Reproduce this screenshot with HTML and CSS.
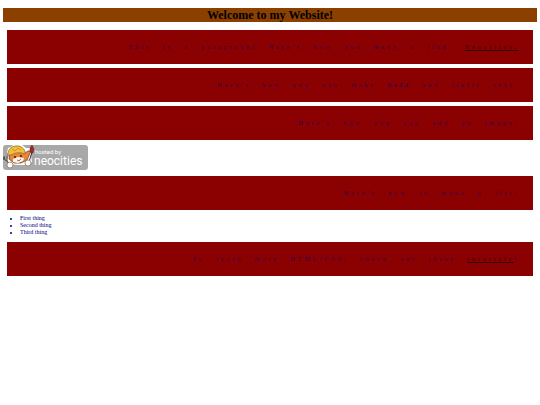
FILE: index.html
```html
<!DOCTYPE html>
<html lang="en">
<head>
<meta charset="utf-8">
<title>Welcome to my Website!</title>
<link rel="stylesheet" href="styles.css">
</head>
<body>
<h1>Welcome to my Website!</h1>
<p>This is a paragraph! Here's how you make a link: <a href="#neocities">Neocities.</a></p>
<p>Here's how you can make <strong>bold</strong> and <em>italic</em> text.</p>
<p>Here's how you can add an image:</p>
<a class="badge" href="#neocities" aria-label="Hosted by Neocities">
<svg width="85" height="25" viewBox="0 0 85 25">
<rect x="0" y="0" width="85" height="25" rx="3" fill="#a8a8a8"/>
<path d="M4 8 5 3 8 2 10 0 19 0 23 3 28 3 28 10 29 17 22 20 15 20 7 19 4 15 6 10Z" fill="#fff"/>
<path d="M7 7 6 14 11 18 18 18 24 15 28 6 25 6 22 8 19 7Z" fill="#e8843c" stroke="#51382c" stroke-width=".7"/>
<path d="M10 14 15 12 21 13 20 16 15 18 10 17Z" fill="#fff4e6"/>
<path d="M5 8Q6 2 12 1Q19 0 22 6L22 9Q15 6 8 10L4 10Z" fill="#f0c03a" stroke="#8c682c" stroke-width=".7"/>
<path d="M9 4 12 6 15 3 18 5" fill="none" stroke="#b88522" stroke-width=".7"/>
<circle cx="12" cy="12" r="1" fill="#30201c"/><circle cx="18" cy="11" r="1" fill="#30201c"/>
<path d="M14 15Q16 17 18 14" fill="none" stroke="#51382c" stroke-width=".7"/>
<path d="M1 11 2 15 4 16 7 20M4 11 4 16M1 15 0 12" fill="none" stroke="#4b4b4b"/>
<path d="M29 7 26 17" stroke="#4a2525"/><path d="M27 7 27 3 29 0 31 4 30 8Z" fill="#a32828" stroke="#552424" stroke-width=".5"/>
<circle cx="7" cy="20" r="3" fill="#fff" stroke="#8b6a50" stroke-width=".7"/>
<circle cx="25" cy="18" r="3" fill="#fff" stroke="#8b6a50" stroke-width=".7"/>
<text class="badge-small" x="32" y="9">hosted by</text>
<text class="badge-name" x="31" y="20">neocities</text>
</svg>
</a>
<p>Here's how to make a list:</p>
<ul>
<li>First thing</li>
<li>Second thing</li>
<li>Third thing</li>
</ul>
<p>To learn more HTML/CSS, check out these <a href="#tutorials">tutorials</a>!</p>
</body>
</html>
```
FILE: styles.css
```css
body {
  margin: 8px 3px;
  background: #fff;
  color: #000080;
  font: 6px/7px "Liberation Serif", serif;
}
h1 {
  margin: 0 0 8px;
  background: #8b4000;
  color: #000;
  font-size: 12px;
  line-height: 14px;
  text-align: center;
}
p {
  margin: 4px;
  padding: 13px 14px;
  line-height: 8px;
  background: #8b0000;
  color: #300058;
  text-align: right;
  letter-spacing: 3px;
  word-spacing: 7px;
}
a { color: #300000; }
.badge {
  display: block;
  width: 85px;
  margin: 5px 0 6px;
}
.badge svg { display: block; }
.badge-small, .badge-name {
  fill: #fff;
  font-family: Roboto, sans-serif;
}
.badge-small { font-size: 6px; }
.badge-name { font-size: 12px; }
ul {
  margin: 5px 0 6px;
  padding-left: 17px;
}
```
